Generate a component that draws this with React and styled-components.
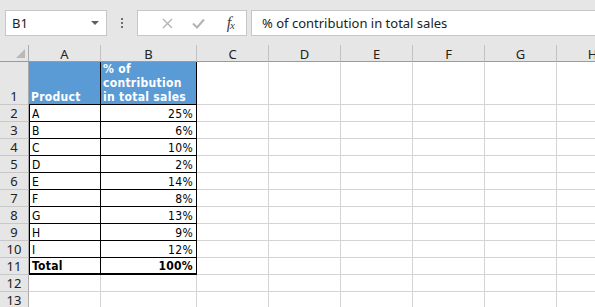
import React from 'react';
import styled, { createGlobalStyle } from 'styled-components';

const Global = createGlobalStyle`
  html, body { margin: 0; padding: 0; background: #e6e6e6; }
  body { width: 595px; height: 307px; overflow: hidden; }
`;

const Window = styled.div`
  width: 595px;
  height: 307px;
  overflow: hidden;
  background: #e6e6e6;
  display: flex;
  flex-direction: column;
  font-family: "Noto Sans", "Open Sans", sans-serif;
`;

const FormulaBar = styled.div`
  height: 45px;
  flex: none;
  box-sizing: border-box;
  padding: 10px 0 0 5px;
  display: flex;
  align-items: flex-start;
`;

const NameBox = styled.div`
  width: 102px;
  height: 26px;
  box-sizing: border-box;
  background: #fff;
  border: 1px solid #c6c6c6;
  display: flex;
  align-items: center;
  justify-content: space-between;
  padding: 0 7px 0 6px;
  font-size: 13px;
  color: #222;
`;

const Caret = styled.span`
  width: 0;
  height: 0;
  border-left: 4px solid transparent;
  border-right: 4px solid transparent;
  border-top: 4px solid #606060;
`;

const Splitter = styled.div`
  width: 30px;
  height: 26px;
  display: flex;
  flex-direction: column;
  align-items: center;
  justify-content: center;
  gap: 2px;
`;

const Dot = styled.span`
  width: 2px;
  height: 2px;
  background: #6e6e6e;
`;

const FxBox = styled.div`
  width: 110px;
  height: 26px;
  box-sizing: border-box;
  background: #fff;
  border: 1px solid #c6c6c6;
  display: flex;
  align-items: center;
  padding-left: 14px;
`;

const FxButton = styled.div`
  width: 35px;
  height: 24px;
  display: flex;
  align-items: center;
  justify-content: center;
`;

const FxLabel = styled.span`
  font-family: "Liberation Serif", serif;
  font-style: italic;
  font-size: 16px;
  color: #444;
  letter-spacing: -1px;
  & sub { font-size: 11px; vertical-align: -1px; }
`;

const FormulaInput = styled.div`
  margin-left: 4px;
  flex: 1;
  height: 26px;
  box-sizing: border-box;
  background: #fff;
  border: 1px solid #c6c6c6;
  border-right: none;
  display: flex;
  align-items: center;
  padding-left: 10px;
  font-size: 13px;
  color: #222;
  white-space: nowrap;
`;

const Sheet = styled.div`
  display: grid;
  grid-template-columns: 29px 72px 96px repeat(6, 72px);
  grid-template-rows: 17px 43px;
  grid-auto-rows: 17px;
  background: #fff;
  flex: none;
`;

const Corner = styled.div`
  background: #e6e6e6;
  box-sizing: border-box;
  border-right: 1px solid #ababab;
  border-bottom: 1px solid #9b9b9b;
  display: flex;
  align-items: flex-end;
  justify-content: flex-end;
  padding: 0 3px 3px 0;
`;

const Triangle = styled.span`
  width: 0;
  height: 0;
  border-left: 9px solid transparent;
  border-bottom: 9px solid #b9b9b9;
`;

const ColHead = styled.div`
  background: #e6e6e6;
  box-sizing: border-box;
  border-right: 1px solid #c2c2c2;
  border-bottom: 1px solid #9b9b9b;
  display: flex;
  align-items: center;
  justify-content: center;
  font-size: 13px;
  color: #222;
  padding-top: 2px;
`;

const RowHead = styled.div`
  background: #e6e6e6;
  box-sizing: border-box;
  border-right: 1px solid #ababab;
  border-bottom: 1px solid #c8c8c8;
  display: flex;
  align-items: flex-end;
  justify-content: center;
  font-size: 13px;
  color: #222;
  line-height: 16px;
`;

const Cell = styled.div`
  box-sizing: border-box;
  background: ${(p) => (p.$fill ? '#5b9bd5' : '#fff')};
  color: ${(p) => (p.$fill ? '#fff' : '#000')};
  border-right: 1px solid ${(p) => (p.$boxed ? '#000' : '#d4d4d4')};
  border-bottom: ${(p) => (p.$thick ? 2 : 1)}px solid ${(p) => (p.$boxed ? '#000' : '#d4d4d4')};
  box-shadow: ${(p) => (p.$left ? 'inset 1px 0 0 #000' : 'none')};
  display: flex;
  align-items: flex-end;
  justify-content: ${(p) => (p.$right ? 'flex-end' : 'flex-start')};
  padding: 0 ${(p) => (p.$right ? 3 : 2)}px 0 ${(p) => (p.$left ? 3 : 2)}px;
  font-family: "DejaVu Sans Condensed", "DejaVu Sans", sans-serif;
  font-stretch: condensed;
  font-size: 12px;
  letter-spacing: 0.3px;
  font-weight: ${(p) => (p.$bold ? 700 : 400)};
  line-height: 14px;
  white-space: pre-line;
  overflow: hidden;
`;

const cols = ['A', 'B', 'C', 'D', 'E', 'F', 'G', 'H'];

const data = [
  ['A', '25%'],
  ['B', '6%'],
  ['C', '10%'],
  ['D', '2%'],
  ['E', '14%'],
  ['F', '8%'],
  ['G', '13%'],
  ['H', '9%'],
  ['I', '12%'],
];

function Blank() {
  return Array.from({ length: 6 }).map((_, i) => <Cell key={i} />);
}

export default function App() {
  return (
    <Window>
      <Global />
      <FormulaBar>
        <NameBox>
          <span>B1</span>
          <Caret />
        </NameBox>
        <Splitter>
          <Dot />
          <Dot />
          <Dot />
        </Splitter>
        <FxBox>
          <FxButton>
            <svg width="11" height="11" viewBox="0 0 11 11">
              <path d="M1 1 L10 10 M10 1 L1 10" stroke="#b3b3b3" strokeWidth="1.4" fill="none" />
            </svg>
          </FxButton>
          <FxButton>
            <svg width="13" height="11" viewBox="0 0 13 11">
              <path d="M1 5.5 L5 9.5 L12 1.5" stroke="#b3b3b3" strokeWidth="2" fill="none" />
            </svg>
          </FxButton>
          <FxButton>
            <FxLabel>
              f<sub>x</sub>
            </FxLabel>
          </FxButton>
        </FxBox>
        <FormulaInput>% of contribution in total sales</FormulaInput>
      </FormulaBar>
      <Sheet>
        <Corner>
          <Triangle />
        </Corner>
        {cols.map((c) => (
          <ColHead key={c}>{c}</ColHead>
        ))}

        <RowHead>1</RowHead>
        <Cell $fill $bold $boxed>Product</Cell>
        <Cell $fill $bold $boxed>{'% of\ncontribution\nin total sales'}</Cell>
        <Blank />

        {data.map(([p, v], i) => (
          <React.Fragment key={p}>
            <RowHead>{i + 2}</RowHead>
            <Cell $boxed $left>{p}</Cell>
            <Cell $boxed $right>{v}</Cell>
            <Blank />
          </React.Fragment>
        ))}

        <RowHead>11</RowHead>
        <Cell $boxed $left $bold $thick>Total</Cell>
        <Cell $boxed $right $bold $thick>100%</Cell>
        <Blank />

        <RowHead>12</RowHead>
        <Cell />
        <Cell />
        <Blank />
        <RowHead>13</RowHead>
        <Cell />
        <Cell />
        <Blank />
      </Sheet>
    </Window>
  );
}
